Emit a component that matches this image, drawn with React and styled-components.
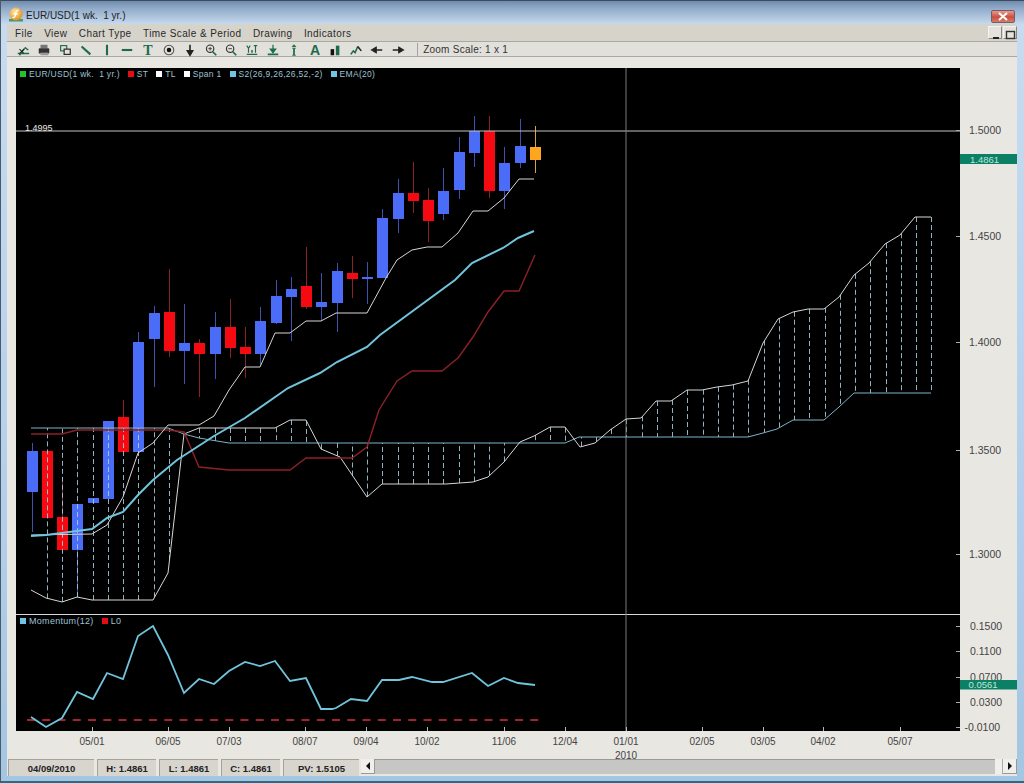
import React from "react";
import styled, { createGlobalStyle } from "styled-components";

const COLORS = {
  blue: "#4a6cf6",
  blueWick: "#3f50ad",
  red: "#f40a10",
  redWick: "#8c2226",
  orange: "#ffa51f",
  orangeWick: "#d9a050",
  line: "#d6d6d6",
  sky: "#70c4dc",
  cloud: "#7db4c8",
  dash: "#a8d4e2",
  teal: "#0b8064",
};

// candle: [bodyTop, bodyBottom, wickTop, wickBottom, type]
const CANDLES = [
  [451, 492, 443, 532, "b"], [451, 518, 451, 518, "r"], [517, 550, 477, 550, "r"], [504, 550, 504, 597, "b"],
  [498, 503, 498, 503, "b"], [421, 499, 421, 499, "b"], [417, 452, 400, 452, "r"], [342, 452, 332, 452, "b"],
  [313, 339, 306, 387, "b"], [312, 351, 269, 357, "r"], [343, 351, 304, 384, "b"], [343, 354, 339, 397, "r"],
  [327, 354, 312, 379, "b"], [327, 348, 299, 358, "r"], [347, 354, 327, 378, "r"], [321, 354, 307, 365, "b"],
  [296, 323, 280, 324, "b"], [289, 297, 277, 341, "b"], [286, 307, 247, 309, "r"], [302, 307, 273, 321, "b"],
  [271, 303, 263, 332, "b"], [273, 279, 256, 298, "r"], [277, 279, 262, 304, "b"], [218, 278, 209, 278, "b"],
  [193, 219, 179, 233, "b"], [193, 201, 162, 213, "r"], [200, 221, 188, 242, "r"], [191, 214, 168, 220, "b"],
  [152, 190, 137, 199, "b"], [131, 153, 116, 167, "b"], [131, 191, 116, 198, "r"], [163, 191, 147, 209, "b"],
  [146, 163, 119, 168, "b"], [147, 160, 126, 173, "o"],
];

const TL = [[31, 535], [92, 534], [107, 525], [123, 497], [138, 453], [153, 443], [168, 425], [199, 425], [214, 416], [229, 390], [245, 367], [260, 367], [275, 333], [290, 333], [306, 321], [321, 321], [336, 313], [367, 313], [386, 278], [397, 260], [412, 250], [427, 247], [442, 247], [458, 233], [473, 211], [488, 211], [504, 198], [519, 179], [534, 179]];
const ST = [[31, 434], [62, 434], [77, 430], [168, 430], [184, 432], [199, 467], [229, 470], [290, 470], [306, 458], [352, 458], [367, 447], [379, 410], [397, 381], [412, 371], [442, 371], [458, 358], [473, 337], [488, 312], [504, 291], [519, 291], [535, 255]];
const EMA = [[31, 536], [46, 535], [92, 529], [107, 518], [123, 512], [138, 495], [153, 480], [177, 460], [214, 436], [245, 418], [288, 388], [320, 373], [337, 362], [367, 347], [380, 335], [455, 280], [472, 263], [503, 248], [518, 238], [534, 231]];
const SPAN = [[31, 590], [46, 598], [62, 602], [77, 597], [92, 600], [153, 600], [168, 573], [184, 434], [199, 428], [275, 428], [290, 420], [306, 420], [321, 449], [340, 457], [367, 497], [382, 484], [446, 484], [473, 482], [488, 477], [504, 462], [520, 442], [534, 436], [550, 427], [565, 427], [580, 447], [595, 443], [610, 430], [626, 419], [641, 418], [656, 401], [671, 401], [687, 390], [702, 390], [717, 387], [732, 385], [748, 381], [763, 343], [778, 319], [793, 312], [808, 309], [824, 309], [839, 297], [854, 275], [869, 263], [885, 244], [900, 235], [915, 217], [931, 217]];
const S2 = [[31, 428], [168, 428], [184, 434], [199, 438], [229, 443], [565, 443], [579, 437], [748, 437], [763, 433], [777, 429], [793, 420], [824, 420], [839, 407], [854, 393], [931, 393]];
const MOMENTUM = [[31, 717], [46, 727], [62, 718], [77, 692], [93, 699], [107, 673], [123, 679], [138, 636], [153, 626], [168, 655], [184, 693], [199, 679], [214, 684], [229, 671], [245, 662], [260, 666], [275, 661], [290, 681], [306, 678], [321, 709], [332, 709], [336, 708], [351, 699], [367, 701], [382, 680], [399, 680], [412, 677], [432, 682], [443, 682], [472, 673], [488, 686], [504, 678], [518, 683], [535, 685]];

const TIME_LABELS = [[92, "05/01"], [168, "06/05"], [229, "07/03"], [305, "08/07"], [366, "09/04"], [427, "10/02"], [504, "11/06"], [565, "12/04"], [626, "01/01"], [702, "02/05"], [763, "03/05"], [823, "04/02"], [900, "05/07"]];
const PRICE_LABELS = [[130, "1.5000"], [236, "1.4500"], [342, "1.4000"], [450, "1.3500"], [554, "1.3000"]];
const MOMENTUM_LABELS = [[626, "0.1500"], [651, "0.1100"], [677, "0.0700"], [702, "0.0300"], [727, "-0.0100"]];
const MENU = ["File", "View", "Chart Type", "Time Scale & Period", "Drawing", "Indicators"];
const LEGEND = [
  ["#22c42a", "EUR/USD(1 wk.  1 yr.)"],
  ["#e80c12", "ST"],
  ["#ffffff", "TL"],
  ["#ffffff", "Span 1"],
  ["#6cc6e4", "S2(26,9,26,26,52,-2)"],
  ["#6cc6e4", "EMA(20)"],
];
const STATUS = [[86, "04/09/2010"], [59, "H: 1.4861"], [59, "L: 1.4861"], [59, "C: 1.4861"], [76, "PV: 1.5105"]];

const slotX = (i) => Math.round(31.5 + 15.25 * i) + 0.5;
const toPoints = (pts) => pts.map((p) => p.join(",")).join(" ");
const valueAt = (pts, x) => {
  for (let i = 1; i < pts.length; i++) {
    if (x <= pts[i][0]) {
      const [x0, y0] = pts[i - 1];
      const [x1, y1] = pts[i];
      return y0 + ((y1 - y0) * (x - x0)) / (x1 - x0);
    }
  }
  return pts[pts.length - 1][1];
};

const bodyColor = { b: COLORS.blue, r: COLORS.red, o: COLORS.orange };
const wickColor = { b: COLORS.blueWick, r: COLORS.redWick, o: COLORS.orangeWick };

const GREEN = "#1d6b4c";
const TOOL_ICONS = [
  <g fill="none" strokeWidth="1.6"><path d="M2 12h13M4 14l6-8" stroke={GREEN} /><path d="M4 7l5 5M9 7l-5 5" stroke="#222" strokeWidth="1.2" /><path d="M10 5l4 3" stroke={GREEN} /></g>,
  <g><rect x="4" y="2" width="8" height="4" fill="#777" /><rect x="2" y="6" width="12" height="6" rx="1" fill="#333" /><rect x="4" y="11" width="9" height="3" fill="#999" /></g>,
  <g fill="none" stroke="#222" strokeWidth="1.3"><rect x="3" y="3" width="7" height="6" stroke={GREEN} /><rect x="7" y="7" width="7" height="6" fill="#e4e2dc" /></g>,
  <path d="M3 4l10 9" stroke={GREEN} strokeWidth="2.4" />,
  <path d="M8 2v12" stroke={GREEN} strokeWidth="2.4" />,
  <path d="M2 8h12" stroke={GREEN} strokeWidth="2.4" />,
  <text x="8" y="14" textAnchor="middle" fontFamily="Liberation Serif, serif" fontWeight="700" fontSize="16" fill={GREEN}>T</text>,
  <g><circle cx="8" cy="8" r="5.5" fill="none" stroke="#555" strokeWidth="1.2" /><circle cx="8" cy="8" r="2.6" fill="#111" /></g>,
  <path d="M8 2v9M5 9l3 5 3-5z" stroke="#222" strokeWidth="1.8" fill="#222" />,
  <g fill="none" stroke="#333"><circle cx="7" cy="6.5" r="4.2" strokeWidth="1.3" /><path d="M10 10l4 4" strokeWidth="2" stroke={GREEN} /><path d="M5 6.5h4M7 4.5v4" /></g>,
  <g fill="none" stroke="#333"><circle cx="7" cy="6.5" r="4.2" strokeWidth="1.3" /><path d="M10 10l4 4" strokeWidth="2" stroke={GREEN} /><path d="M5 6.5h4" /></g>,
  <g fill="none" stroke={GREEN} strokeWidth="1.3"><path d="M2 3l2 3 2-3M4 6v5M10 3h4M12 3v8M2 13h12" /><path d="M8 8v3" stroke="#222" /></g>,
  <g fill={GREEN} stroke={GREEN}><path d="M8 2v6M5 7l3 4 3-4z" strokeWidth="1.4" /><path d="M2 13h12" strokeWidth="2" /></g>,
  <g fill={GREEN} stroke={GREEN}><path d="M8 6v8" strokeWidth="2" /><path d="M6 14h4M6 6h4" /><path d="M6 4l2-2 2 2z" /></g>,
  <text x="8" y="14" textAnchor="middle" fontFamily="Liberation Sans, sans-serif" fontWeight="700" fontSize="16" fill={GREEN}>A</text>,
  <g><rect x="3" y="7" width="4" height="7" fill="#111" /><rect x="9" y="3" width="4" height="11" fill={GREEN} /></g>,
  <g fill="none" strokeWidth="1.8"><path d="M2 13l3-4 2 2 3-7" stroke={GREEN} /><path d="M10 4l4 5" stroke="#222" /></g>,
  <path d="M14 8H6M7 5L2 8l5 3z" stroke="#222" strokeWidth="1.6" fill="#222" />,
  <path d="M2 8h8M9 5l5 3-5 3z" stroke="#222" strokeWidth="1.6" fill="#222" />,
];

const App = () => {
  const dashXs = Array.from({ length: 59 }, (_, i) => slotX(i + 1));

  return (
    <Window>
      <GlobalStyle />
      <TitleBar>
        <AppIcon viewBox="0 0 16 15">
          <defs>
            <radialGradient id="coin" cx="0.4" cy="0.35" r="0.7">
              <stop offset="0" stopColor="#ffe9a0" />
              <stop offset="1" stopColor="#e08a1c" />
            </radialGradient>
          </defs>
          <rect x="1" y="12" width="14" height="2.5" fill="#4f9a5a" />
          <circle cx="8" cy="7" r="6.5" fill="url(#coin)" />
          <path d="M10.5 3.5C8.5 3 8 4.5 7.6 7S6.5 11 4.5 10.5M5.5 7h4" stroke="#fff" strokeWidth="1.3" fill="none" />
        </AppIcon>
        <TitleText>EUR/USD(1 wk.&nbsp; 1 yr.)</TitleText>
        <CloseButton>
          <svg width="10" height="9" viewBox="0 0 10 9">
            <path d="M1 1l8 7M9 1L1 8" stroke="#fff" strokeWidth="2" />
          </svg>
        </CloseButton>
      </TitleBar>
      <Frame>
        <MenuBar>
          {MENU.map((m) => (
            <MenuItem key={m}>{m}</MenuItem>
          ))}
          <WindowButtons>
            <SmallButton>
              <svg width="13" height="12"><rect x="4" y="8" width="6" height="2" fill="#222" /></svg>
            </SmallButton>
            <SmallButton>
              <svg width="13" height="12"><rect x="2.5" y="2.5" width="8" height="7" fill="none" stroke="#333" strokeWidth="1.4" /></svg>
            </SmallButton>
          </WindowButtons>
        </MenuBar>
        <Toolbar>
          {TOOL_ICONS.map((icon, i) => (
            <ToolButton key={i}>
              <svg width="16" height="16" viewBox="0 0 16 16">{icon}</svg>
            </ToolButton>
          ))}
          <ToolSeparator />
          <ZoomLabel>Zoom Scale: 1 x 1</ZoomLabel>
        </Toolbar>
        <Body>
          <ChartGrid>
            <PlotCell>
              <Legend $top={0} $size={8.5}>
                {LEGEND.map(([color, label]) => (
                  <LegendItem key={label}>
                    <LegendSwatch $color={color} />
                    {label}
                  </LegendItem>
                ))}
              </Legend>
              <Plot width="944" height="546" viewBox="16 68 944 546">
                {CANDLES.map(([top, bottom, wTop, wBottom, type], i) => (
                  <g key={i}>
                    <line x1={slotX(i)} x2={slotX(i)} y1={wTop} y2={wBottom} stroke={wickColor[type]} />
                    <rect x={slotX(i) - 5.5} y={top} width="11" height={bottom - top} fill={bodyColor[type]} />
                  </g>
                ))}
                {dashXs.map((x) => {
                  const a = valueAt(SPAN, x);
                  const b = valueAt(S2, x);
                  if (Math.abs(a - b) < 4) return null;
                  return <line key={x} x1={x} x2={x} y1={a} y2={b} stroke={COLORS.dash} strokeDasharray="5 3" opacity="0.85" />;
                })}
                <line x1="16" x2="960" y1="131" y2="131" stroke="#c4c4c4" strokeWidth="1.2" />
                <line x1="626" x2="626" y1="68" y2="614" stroke="#7a7a7a" />
                <polyline points={toPoints(S2)} fill="none" stroke={COLORS.cloud} />
                <polyline points={toPoints(SPAN)} fill="none" stroke={COLORS.line} />
                <polyline points={toPoints(ST)} fill="none" stroke={COLORS.redWick} strokeWidth="1.4" />
                <polyline points={toPoints(TL)} fill="none" stroke={COLORS.line} />
                <polyline points={toPoints(EMA)} fill="none" stroke={COLORS.sky} strokeWidth="2" />
                <text x="25" y="131" fontSize="9" fill="#e8e8e8" fontFamily="Liberation Sans, sans-serif">1.4995</text>
                {PRICE_LABELS.map(([y, label]) => (
                  <line key={label} x1="956" x2="960" y1={y + 0.5} y2={y + 0.5} stroke="#aaa" />
                ))}
              </Plot>
            </PlotCell>
            <Axis width="57" height="546" viewBox="960 68 57 546">
              {PRICE_LABELS.map(([y, label]) => (
                <text key={label} x="969" y={y + 4}>{label}</text>
              ))}
              <rect x="960" y="154" width="57" height="10" fill={COLORS.teal} />
              <BadgeText x="970" y="162.5">1.4861</BadgeText>
            </Axis>
            <PlotCell>
              <Legend $top={1} $size={9}>
                <LegendItem>
                  <LegendSwatch $color="#6cc6e4" />
                  Momentum(12)
                </LegendItem>
                <LegendItem>
                  <LegendSwatch $color="#e80c12" />
                  L0
                </LegendItem>
              </Legend>
              <Plot width="944" height="117" viewBox="16 614 944 117">
                <line x1="16" x2="960" y1="614.5" y2="614.5" stroke="#d8d8d8" />
                <line x1="626" x2="626" y1="614" y2="731" stroke="#7a7a7a" />
                <line x1="27" x2="541" y1="720" y2="720" stroke="#a8202c" strokeWidth="2" strokeDasharray="8 7.25" />
                <polyline points={toPoints(MOMENTUM)} fill="none" stroke={COLORS.sky} strokeWidth="1.8" />
                {TIME_LABELS.map(([x, label]) => (
                  <line key={label} x1={x + 0.5} x2={x + 0.5} y1="727" y2="731" stroke="#bbb" />
                ))}
                {MOMENTUM_LABELS.map(([y, label]) => (
                  <line key={label} x1="956" x2="960" y1={y + 0.5} y2={y + 0.5} stroke="#aaa" />
                ))}
              </Plot>
            </PlotCell>
            <Axis width="57" height="117" viewBox="960 614 57 117">
              {MOMENTUM_LABELS.map(([y, label]) => (
                <text key={label} x={label.startsWith("-") ? 964.5 : 970} y={y + 4}>{label}</text>
              ))}
              <rect x="960" y="680" width="57" height="9.5" fill={COLORS.teal} />
              <BadgeText x="968.5" y="688.3">0.0561</BadgeText>
            </Axis>
            <TimeAxis width="1001" height="28" viewBox="16 731 1001 28">
              {TIME_LABELS.map(([x, label]) => (
                <text key={label} x={x} y="745" textAnchor="middle">{label}</text>
              ))}
              <text x="626" y="758.5" textAnchor="middle">2010</text>
            </TimeAxis>
          </ChartGrid>
        </Body>
        <StatusBar>
          {STATUS.map(([w, label]) => (
            <StatusCell key={label} $width={w}>{label}</StatusCell>
          ))}
          <ScrollBar>
            <ScrollButton>
              <svg width="6" height="8"><path d="M5 0v8L1 4z" fill="#111" /></svg>
            </ScrollButton>
            <ScrollTrack />
            <ScrollThumb />
            <ScrollButton>
              <svg width="6" height="8"><path d="M1 0v8l4-4z" fill="#111" /></svg>
            </ScrollButton>
          </ScrollBar>
        </StatusBar>
      </Frame>
    </Window>
  );
};

export default App;

const GlobalStyle = createGlobalStyle`
  html, body {
    margin: 0;
    padding: 0;
    background: #b6d0ec;
  }
  * {
    box-sizing: border-box;
  }
`;

const Window = styled.div`
  width: 1024px;
  height: 783px;
  display: flex;
  flex-direction: column;
  overflow: hidden;
  font-family: "Liberation Sans", Arial, sans-serif;
  background: linear-gradient(180deg, #c8dcf0 0%, #b6d0ec 60%, #a3c6e2 100%);
  border-left: 1px solid #4a5a68;
  border-bottom: 2px solid #2f6a84;
`;

const TitleBar = styled.div`
  height: 24px;
  flex: none;
  display: flex;
  align-items: center;
  padding-left: 7px;
  background: linear-gradient(180deg, #6f8cae 0%, #8fa9c8 30%, #c6daee 100%);
  border-top: 1px solid #3d4c58;
`;

const AppIcon = styled.svg`
  width: 16px;
  height: 15px;
  margin-top: 4px;
`;

const TitleText = styled.span`
  margin: 5px 0 0 2px;
  font-size: 10px;
  color: #222;
`;

const CloseButton = styled.div`
  width: 24px;
  height: 13px;
  margin: 7px 9px 0 auto;
  display: flex;
  align-items: center;
  justify-content: center;
  background: linear-gradient(180deg, #e79a90 0%, #c8503f 55%, #d97a68 100%);
  border: 1px solid #7d5a5c;
  border-radius: 2px;
`;

const Frame = styled.div`
  flex: 1;
  min-height: 0;
  margin: 0 7px 5px 6px;
  display: flex;
  flex-direction: column;
  background: #e9e7e2;
`;

const MenuBar = styled.div`
  height: 17px;
  flex: none;
  display: flex;
  align-items: center;
  gap: 11.5px;
  padding: 2px 0 0 8px;
  background: #d6d3cb;
`;

const MenuItem = styled.span`
  font-size: 10px;
  letter-spacing: 0.4px;
  color: #2a2a2a;
`;

const WindowButtons = styled.div`
  margin-left: auto;
  margin-top: -2px;
  display: flex;
  gap: 1px;
`;

const SmallButton = styled.div`
  width: 14px;
  height: 13px;
  background: #e4e2dc;
  border: 1px solid #f4f3ef;
  border-right-color: #888;
  border-bottom-color: #888;
`;

const Toolbar = styled.div`
  height: 16px;
  flex: none;
  display: flex;
  align-items: center;
  padding: 1px 0 0 6px;
  background: #e2e0da;
  border-top: 1px solid #aaa8a2;
  border-bottom: 1px solid #aaa8a2;
`;

const ToolButton = styled.div`
  width: 20.8px;
  height: 14px;
  flex: none;
  display: flex;
  align-items: center;
  justify-content: center;
  svg {
    display: block;
    width: 14px;
    height: 14px;
  }
`;

const ToolSeparator = styled.div`
  width: 1px;
  height: 14px;
  margin-left: 9px;
  background: #a4a29c;
`;

const ZoomLabel = styled.span`
  margin-left: 5px;
  font-size: 10px;
  letter-spacing: 0.25px;
  color: #333;
`;

const Body = styled.div`
  flex: 1;
  min-height: 0;
  padding: 11px 0 0 9px;
`;

const ChartGrid = styled.div`
  display: grid;
  grid-template-columns: 944px 57px;
  grid-template-rows: 546px 117px 28px;
`;

const PlotCell = styled.div`
  position: relative;
  background: #000;
`;

const Plot = styled.svg`
  display: block;
`;

const Legend = styled.div`
  position: absolute;
  top: ${(p) => p.$top}px;
  left: 4px;
  display: flex;
  gap: 8px;
  font-size: ${(p) => p.$size}px;
  letter-spacing: 0.3px;
  color: #9fc0d2;
  white-space: pre;
`;

const LegendItem = styled.div`
  display: flex;
  align-items: center;
  gap: 3px;
  height: 11px;
`;

const LegendSwatch = styled.i`
  width: 6px;
  height: 6px;
  background: ${(p) => p.$color};
`;

const Axis = styled.svg`
  display: block;
  overflow: visible;
  font-size: 10.5px;
  fill: #444;
`;

const BadgeText = styled.text`
  font-size: 9.5px;
  fill: #bfe6da;
`;

const TimeAxis = styled.svg`
  grid-column: 1 / 3;
  display: block;
  overflow: visible;
  font-size: 10px;
  fill: #444;
`;

const StatusBar = styled.div`
  height: 17px;
  flex: none;
  margin-top: auto;
  display: flex;
  gap: 3px;
  padding-left: 1px;
`;

const StatusCell = styled.div`
  width: ${(p) => p.$width}px;
  flex: none;
  display: flex;
  align-items: center;
  justify-content: center;
  font-size: 9.5px;
  font-weight: 700;
  color: #222;
  background: #d8d5cf;
  border-top: 1px solid #a6a39d;
  border-left: 1px solid #a6a39d;
`;

const ScrollBar = styled.div`
  flex: 1;
  min-width: 0;
  height: 15px;
  margin-left: -1px;
  display: flex;
`;

const ScrollButton = styled.div`
  width: 14px;
  flex: none;
  display: flex;
  align-items: center;
  justify-content: center;
  background: #f0efeb;
  border-right: 1px solid #999;
  border-bottom: 1px solid #999;
`;

const ScrollTrack = styled.div`
  flex: 1;
  background: #c6c6c4;
  border-top: 1px solid #999;
`;

const ScrollThumb = styled.div`
  width: 8px;
  flex: none;
  background: #f0efeb;
  border-right: 1px solid #aaa;
`;
